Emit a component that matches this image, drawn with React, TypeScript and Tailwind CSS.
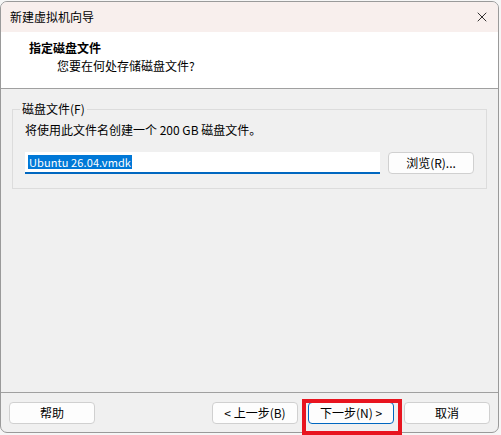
import { X } from 'lucide-react';

const font = { fontFamily: '"Noto Sans CJK SC", "Noto Sans", sans-serif' };

function Btn({ children, primary }: { children: React.ReactNode; primary?: boolean }) {
    return (
        <button
            className={`h-[22px] w-[86px] rounded-[4px] bg-[#fdfdfd] text-[12px] leading-none text-black ${primary ? 'border border-[#0067c0]' : 'border border-[#d0d0d0]'}`}
        >
            {children}
        </button>
    );
}

export default function App() {
    return (
        <div className="relative h-[435px] w-[501px] overflow-hidden bg-[#f6f6f6]" style={font}>
            <div className="mt-[1px] flex h-[432px] w-[499px] flex-col overflow-hidden rounded-[7px] border border-[#9a9a9a] bg-[#f0f0f0]">
                {/* title bar */}
                <div className="flex h-[30px] shrink-0 items-center justify-between bg-[#f8efed] pl-[9px] pr-[8px]">
                    <span className="text-[12px] text-black">新建虚拟机向导</span>
                    <X size={16} strokeWidth={1.2} className="text-black" />
                </div>

                {/* header */}
                <div className="h-[57px] shrink-0 border-b border-[#a0a0a0] bg-white pl-[28px] pt-[7px]">
                    <div className="text-[12px] font-bold leading-[18px] text-black">指定磁盘文件</div>
                    <div className="pl-[28px] text-[12px] leading-[18px] text-black">您要在何处存储磁盘文件?</div>
                </div>

                {/* body */}
                <div className="flex-1 px-[11px] pt-[12px]">
                    <fieldset className="h-[88px] rounded-none border border-[#dcdcdc] px-[12px] pb-0">
                        <legend className="ml-[-5px] px-[2px] text-[12px] leading-[16px] text-black">磁盘文件(F)</legend>
                        <div className="mt-[5px] text-[12px] leading-[16px] text-black">将使用此文件名创建一个 200 GB 磁盘文件。</div>
                        <div className="mt-[14px] flex items-center gap-[8px]">
                            <div className="flex h-[22px] w-[355px] items-center border-b-2 border-[#0067c0] bg-white pl-[3px]">
                                <span className="bg-[#0078d7] px-[1px] text-[11px] leading-[14px] tracking-[0.1px] text-white">Ubuntu 26.04.vmdk</span>
                            </div>
                            <Btn>浏览(R)...</Btn>
                        </div>
                    </fieldset>
                </div>

                {/* footer */}
                <div className="flex h-[40px] shrink-0 items-center border-t border-[#a0a0a0] pl-[8px] pr-[8px]">
                    <Btn>帮助</Btn>
                    <div className="ml-auto flex gap-[10px]">
                        <Btn>&lt; 上一步(B)</Btn>
                        <Btn primary>下一步(N) &gt;</Btn>
                        <Btn>取消</Btn>
                    </div>
                </div>
            </div>

            {/* highlight around the next button */}
            <div className="absolute left-[302px] top-[399px] h-[36px] w-[100px] border-[4px] border-[#e8141f]" />
        </div>
    );
}
